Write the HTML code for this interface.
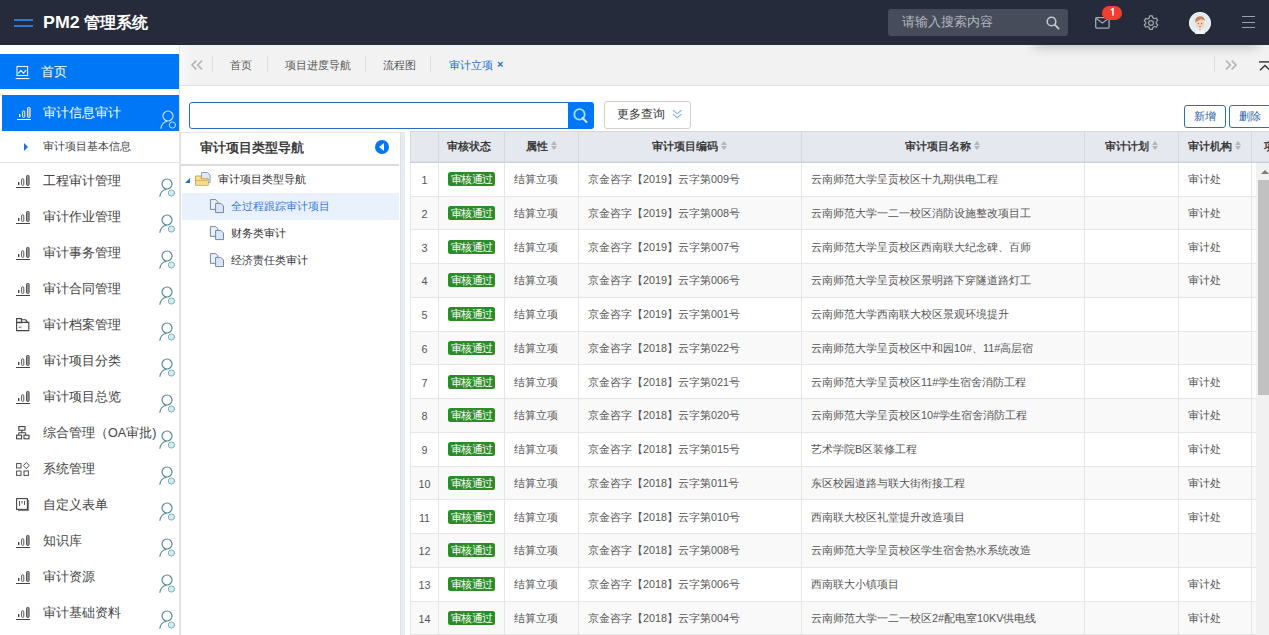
<!DOCTYPE html>
<html><head><meta charset="utf-8">
<style>
*{box-sizing:border-box;margin:0;padding:0}
html,body{width:1269px;height:635px;overflow:hidden;background:#fff;font-family:"Liberation Sans",sans-serif;color:#333}
.abs{position:absolute}
svg.abs{overflow:visible}
#hdr{position:absolute;z-index:2;left:0;top:0;width:1269px;height:44.5px;background:#252b3b}
#hdr .ham{position:absolute;left:14px;width:19px;height:2px;background:#2a7ad6}
#hdr .title{position:absolute;left:43px;top:11px;font-size:16.2px;font-weight:bold;color:#fff;line-height:22px;white-space:nowrap}
#hsearch{position:absolute;left:888px;top:9px;width:180px;height:27px;background:#474c5b;border-radius:3px}
#hsearch span{position:absolute;left:14px;top:5px;font-size:12.6px;line-height:16px;color:#b3b7bf}
#side{position:absolute;left:0;top:44.5px;width:180px;height:591px;background:#fff;border-right:1px solid #e6e6e6}
.blue{position:absolute;background:#0077f7;color:#fff}
.si{position:absolute;left:0;width:179px;height:36px}
.si span{position:absolute;left:43px;top:9px;font-size:12.6px;line-height:18px;color:#444;white-space:nowrap}
.si svg{position:absolute;overflow:visible}
#tabs{position:absolute;left:180px;top:44.5px;width:1089px;height:41px;background:#f2f2f2;border-bottom:1px solid #e0e0e0}
#tabs .t{position:absolute;top:13px;font-size:10.8px;line-height:15px;color:#555;white-space:nowrap}
#tabs .sep{position:absolute;top:11px;width:1px;height:16px;background:#dedede}
#tree{position:absolute;left:179.5px;top:131.5px;width:221px;height:510px;border:1px solid #e0e0e0;background:#fff}
#tbl{position:absolute;left:410px;top:130.5px;width:871px;border-collapse:collapse;table-layout:fixed;font-size:10.8px;color:#555}
#tbl th{height:31px;background:#e6e8f0;border:1px solid #d5d7df;border-bottom-color:#cdd0d8;box-shadow:inset 0 -1px 0 #dadce5;font-weight:bold;color:#3a3a3a;font-size:10.8px;white-space:nowrap;overflow:hidden}
#tbl td{height:33.75px;border:1px solid #e6e6e6;white-space:nowrap;overflow:hidden;padding-left:9px;padding-top:2px}
#tbl tr.alt td{background:#f9f9f9}
#tbl tr.r1 td{height:34px}
#tbl td.c0{padding-left:0;text-align:center}
.sort{display:inline-block;vertical-align:middle;margin-left:3px;width:7px;height:9px;position:relative;top:-1px}
.sort:before{content:"";position:absolute;left:0;top:0;border-left:3.5px solid transparent;border-right:3.5px solid transparent;border-bottom:4px solid #b5b5b5}
.sort:after{content:"";position:absolute;left:0;top:5px;border-left:3.5px solid transparent;border-right:3.5px solid transparent;border-top:4px solid #b5b5b5}
.badge{display:inline-block;position:relative;top:-1px;vertical-align:middle;background:#2b8c28;color:#fff;font-size:10.8px;font-weight:500;line-height:14px;height:14px;width:47px;padding-left:2.5px;border-radius:2.5px;letter-spacing:-0.4px;white-space:nowrap;overflow:hidden}
.btn{position:absolute;border:1px solid #2a6fc0;border-radius:3px;background:#fff;color:#2a5fa8;font-size:10.8px;line-height:20px;text-align:center}
</style></head><body>
<svg width="0" height="0" style="position:absolute">
  <defs>
    <symbol id="bar" viewBox="0 0 16 16">
      <rect x="2" y="8" width="1.4" height="3" fill="currentColor"/>
      <rect x="5.6" y="4.8" width="2.2" height="6.6" rx="1" fill="none" stroke="currentColor" stroke-width="0.9"/>
      <rect x="10.5" y="1.4" width="2.6" height="10" rx="1" fill="#999" stroke="currentColor" stroke-width="0.9"/>
      <rect x="0" y="13" width="14" height="1" fill="currentColor"/>
    </symbol>
    <symbol id="usr" viewBox="0 0 20 24">
      <circle cx="8" cy="7" r="5" fill="none" stroke="currentColor" stroke-width="1.2"/>
      <path d="M0.8 19.8 C1.2 15.8 4 12.6 7.4 12.1" fill="none" stroke="currentColor" stroke-width="1.2"/>
      <circle cx="12.4" cy="16" r="3.1" fill="var(--f,none)" stroke="var(--g,currentColor)" stroke-width="1"/>
    </symbol>
  </defs>
</svg>
<div id="hdr">
  <div class="ham" style="top:19px"></div><div class="ham" style="top:25px"></div>
  <div class="title"><span style="display:inline-block;transform:scaleX(1.1);transform-origin:0 0;margin-right:3.2px">PM2</span> 管理系统</div>
  <div id="hsearch"><span>请输入搜索内容</span>
    <svg class="abs" style="left:158px;top:7px" width="14" height="14" viewBox="0 0 14 14"><circle cx="5.5" cy="5.5" r="4.3" fill="none" stroke="#c5c8ce" stroke-width="1.6"/><path d="M8.7 8.7 L12.5 12.5" stroke="#c5c8ce" stroke-width="1.8" stroke-linecap="round"/></svg>
  </div>
  <svg class="abs" style="left:1095px;top:16.8px" width="15" height="12" viewBox="0 0 15 12"><rect x="0.7" y="0.7" width="13.4" height="10.4" rx="1" fill="none" stroke="#a4a9b1" stroke-width="1.3"/><path d="M0.9 1.2 L7.4 6 L13.9 1.2" fill="none" stroke="#a4a9b1" stroke-width="1.2"/></svg>
  <div class="abs" style="left:1102px;top:6px;width:20px;height:14px;border-radius:7px;background:#f23d30"></div><svg class="abs" style="left:1109.5px;top:8.3px" width="6" height="8" viewBox="0 0 6 8"><path d="M0.8 2 L3 0.7 V7.6" fill="none" stroke="#fff" stroke-width="1.5"/></svg>
  <svg class="abs" style="left:1143px;top:14.5px" width="16" height="16" viewBox="0 0 16 16"><path d="M6.6 0.8h2.8l0.4 2 1.6 0.9 1.9-0.7 1.4 2.4-1.5 1.3v1.8l1.5 1.3-1.4 2.4-1.9-0.7-1.6 0.9-0.4 2H6.6l-0.4-2-1.6-0.9-1.9 0.7-1.4-2.4 1.5-1.3V7.1L1.3 5.8l1.4-2.4 1.9 0.7 1.6-0.9z" fill="none" stroke="#a3a8b0" stroke-width="1.2" stroke-linejoin="round"/><circle cx="8" cy="8" r="2.4" fill="none" stroke="#a3a8b0" stroke-width="1.2"/></svg>
  <svg class="abs" style="left:1189px;top:11.5px" width="22" height="22" viewBox="0 0 22 22"><circle cx="11" cy="11" r="11" fill="#e4ebec"/><circle cx="11" cy="11" r="10.3" fill="none" stroke="#f3f6f6" stroke-width="0.8"/><path d="M6 22 Q7 17 11 16.5 Q15 17 16 22z" fill="#f4f4f6"/><path d="M9.5 16.5 L11 19 L12.5 16.5z" fill="#b9c3cf"/><ellipse cx="11" cy="11.5" rx="4.2" ry="5" fill="#f1d2bf"/><path d="M6.2 10.5 Q5.8 4.5 11 4.3 Q15.8 4.5 15.8 9 Q14 6.8 11.5 7.2 Q9 8.5 6.2 10.5z" fill="#c9825a"/><circle cx="9.3" cy="11.6" r="0.6" fill="#6b4b3a"/><circle cx="12.7" cy="11.6" r="0.6" fill="#6b4b3a"/><path d="M9.8 14 Q11 15.2 12.2 14z" fill="#8a4a40"/></svg>
  <div class="abs" style="left:1242px;top:16.2px;width:13px;height:1.2px;background:#9ba0a9"></div>
  <div class="abs" style="left:1242px;top:21.8px;width:13px;height:1.2px;background:#9ba0a9"></div>
  <div class="abs" style="left:1242px;top:27.2px;width:13px;height:1.2px;background:#9ba0a9"></div>
</div>
<div id="side">
  <div class="blue" style="left:0;top:9.5px;width:179px;height:35px">
    <svg class="abs" style="left:14.5px;top:12px" width="15" height="14" viewBox="0 0 15 14"><rect x="2" y="0.5" width="10.6" height="9" fill="none" stroke="#e6f4ff" stroke-width="1.1"/><path d="M3.4 7.4 L5.8 4.4 L8.6 7.2 L11.2 3.8" fill="none" stroke="#e6f4ff" stroke-width="1.1"/><rect x="0.6" y="12" width="13.8" height="1.1" fill="#e6f4ff"/></svg>
    <span class="abs" style="left:40.5px;top:8.5px;font-size:12.6px;line-height:18px">首页</span></div>
  <div class="blue" style="left:2px;top:50.5px;width:177px;height:36px">
    <svg class="abs" style="left:14.5px;top:10.8px;color:#fff" width="16" height="16"><use href="#bar"/></svg>
    <span class="abs" style="left:41px;top:9px;font-size:12.6px;line-height:18px">审计信息审计</span>
    <svg class="abs" style="left:157.5px;top:14px;color:#bfe0ff" width="20" height="24" viewBox="0 0 20 24"><use href="#usr"/></svg>
  </div>
  <div class="abs" style="left:24px;top:98px;width:0;height:0;border-top:4.5px solid transparent;border-bottom:4.5px solid transparent;border-left:4.5px solid #1a73d6"></div>
  <div class="abs" style="left:43px;top:94px;font-size:10.8px;line-height:14px;color:#444">审计项目基本信息</div>
  <div class="abs" style="left:0;top:117.5px;width:179px;height:1px;background:#e3e3e3"></div>
</div>
<div id="sideitems" class="abs" style="left:0;top:0">
<div class="si" style="top:163px"><svg style="left:16px;top:10.7px;color:#444" width="16" height="16"><use href="#bar"/></svg><span>工程审计管理</span><svg style="left:158.5px;top:14px;color:#5b8c97;--f:#d3ecf3;--g:#7fb0be" width="20" height="24" viewBox="0 0 20 24"><use href="#usr"/></svg></div>
<div class="si" style="top:199px"><svg style="left:16px;top:10.7px;color:#444" width="16" height="16"><use href="#bar"/></svg><span>审计作业管理</span><svg style="left:158.5px;top:14px;color:#5b8c97;--f:#d3ecf3;--g:#7fb0be" width="20" height="24" viewBox="0 0 20 24"><use href="#usr"/></svg></div>
<div class="si" style="top:235px"><svg style="left:16px;top:10.7px;color:#444" width="16" height="16"><use href="#bar"/></svg><span>审计事务管理</span><svg style="left:158.5px;top:14px;color:#5b8c97;--f:#d3ecf3;--g:#7fb0be" width="20" height="24" viewBox="0 0 20 24"><use href="#usr"/></svg></div>
<div class="si" style="top:271px"><svg style="left:16px;top:10.7px;color:#444" width="16" height="16"><use href="#bar"/></svg><span>审计合同管理</span><svg style="left:158.5px;top:14px;color:#5b8c97;--f:#d3ecf3;--g:#7fb0be" width="20" height="24" viewBox="0 0 20 24"><use href="#usr"/></svg></div>
<div class="si" style="top:307px"><svg style="left:16px;top:11px" width="14" height="14" viewBox="0 0 14 14"><path d="M0.6 0.6h4.8v4.2H0.6z M5.4 1.8h4.2l2 2.4 M0.6 4.4h12.2v8.2H0.6z" fill="none" stroke="#444" stroke-width="1.1"/><rect x="2.6" y="8.6" width="3" height="1" fill="#666"/></svg><span>审计档案管理</span><svg style="left:158.5px;top:14px;color:#5b8c97;--f:#d3ecf3;--g:#7fb0be" width="20" height="24" viewBox="0 0 20 24"><use href="#usr"/></svg></div>
<div class="si" style="top:343px"><svg style="left:16px;top:10.7px;color:#444" width="16" height="16"><use href="#bar"/></svg><span>审计项目分类</span><svg style="left:158.5px;top:14px;color:#5b8c97;--f:#d3ecf3;--g:#7fb0be" width="20" height="24" viewBox="0 0 20 24"><use href="#usr"/></svg></div>
<div class="si" style="top:379px"><svg style="left:16px;top:10.7px;color:#444" width="16" height="16"><use href="#bar"/></svg><span>审计项目总览</span><svg style="left:158.5px;top:14px;color:#5b8c97;--f:#d3ecf3;--g:#7fb0be" width="20" height="24" viewBox="0 0 20 24"><use href="#usr"/></svg></div>
<div class="si" style="top:415px"><svg style="left:16px;top:11px" width="14" height="14" viewBox="0 0 14 14"><rect x="2.8" y="0.6" width="6.2" height="3.6" fill="none" stroke="#444" stroke-width="1.1"/><path d="M5.9 4.2v2.5 M2.8 6.7h6.8 M2.8 6.7v2 M9.6 6.7v2" fill="none" stroke="#444" stroke-width="1.1"/><rect x="0.6" y="9.2" width="5" height="3.6" fill="none" stroke="#444" stroke-width="1.1"/><rect x="8" y="9.2" width="5" height="3.6" fill="none" stroke="#444" stroke-width="1.1"/></svg><span>综合管理（OA审批)</span><svg style="left:158.5px;top:14px;color:#5b8c97;--f:#d3ecf3;--g:#7fb0be" width="20" height="24" viewBox="0 0 20 24"><use href="#usr"/></svg></div>
<div class="si" style="top:451px"><svg style="left:16px;top:10.5px" width="14" height="15" viewBox="0 0 14 15"><rect x="0.6" y="1.6" width="4.4" height="4.4" fill="none" stroke="#444" stroke-width="0.95"/><path d="M10.3 0.5 L13.2 3.6 L10.3 6.7 L7.4 3.6z" fill="none" stroke="#444" stroke-width="0.95"/><rect x="0.6" y="9" width="4.4" height="4.4" fill="none" stroke="#444" stroke-width="0.95"/><rect x="8" y="9" width="4.4" height="4.4" fill="none" stroke="#444" stroke-width="0.95"/></svg><span>系统管理</span><svg style="left:158.5px;top:14px;color:#5b8c97;--f:#d3ecf3;--g:#7fb0be" width="20" height="24" viewBox="0 0 20 24"><use href="#usr"/></svg></div>
<div class="si" style="top:487px"><svg style="left:16px;top:11px" width="14" height="14" viewBox="0 0 14 14"><rect x="0.6" y="0.6" width="10.8" height="10.8" fill="none" stroke="#444" stroke-width="1.1"/><path d="M12.6 2v10.6H2" fill="none" stroke="#777" stroke-width="1"/><path d="M3.5 3v5 M6 3v2.5 M8.5 3v4" stroke="#555" stroke-width="1"/></svg><span>自定义表单</span><svg style="left:158.5px;top:14px;color:#5b8c97;--f:#d3ecf3;--g:#7fb0be" width="20" height="24" viewBox="0 0 20 24"><use href="#usr"/></svg></div>
<div class="si" style="top:523px"><svg style="left:16px;top:10.7px;color:#444" width="16" height="16"><use href="#bar"/></svg><span>知识库</span><svg style="left:158.5px;top:14px;color:#5b8c97;--f:#d3ecf3;--g:#7fb0be" width="20" height="24" viewBox="0 0 20 24"><use href="#usr"/></svg></div>
<div class="si" style="top:559px"><svg style="left:16px;top:10.7px;color:#444" width="16" height="16"><use href="#bar"/></svg><span>审计资源</span><svg style="left:158.5px;top:14px;color:#5b8c97;--f:#d3ecf3;--g:#7fb0be" width="20" height="24" viewBox="0 0 20 24"><use href="#usr"/></svg></div>
<div class="si" style="top:595px"><svg style="left:16px;top:10.7px;color:#444" width="16" height="16"><use href="#bar"/></svg><span>审计基础资料</span><svg style="left:158.5px;top:14px;color:#5b8c97;--f:#d3ecf3;--g:#7fb0be" width="20" height="24" viewBox="0 0 20 24"><use href="#usr"/></svg></div>
</div>
<div id="tabs">
  <div class="abs" style="left:0;top:0;width:11px;height:40px;background:linear-gradient(to right,#f8f8f8,#f3f3f3)"></div><svg class="abs" style="left:10.5px;top:15px" width="12" height="10" viewBox="0 0 12 10"><path d="M5.3 0.6 L1 5 L5.3 9.4 M11 0.6 L6.7 5 L11 9.4" fill="none" stroke="#b4b4b4" stroke-width="1.6"/></svg>
  <div class="sep" style="left:32px"></div>
  <span class="t" style="left:50px">首页</span>
  <div class="sep" style="left:87px"></div>
  <span class="t" style="left:105px">项目进度导航</span>
  <div class="sep" style="left:185px"></div>
  <span class="t" style="left:203px">流程图</span>
  <div class="sep" style="left:250px"></div>
  <span class="t" style="left:269px;color:#1a6fd4;font-weight:500">审计立项</span>
  <span class="t" style="left:317px;top:12px;color:#1a6fd4;font-weight:bold;font-size:11px">×</span>
  <div class="sep" style="left:1034px"></div>
  <svg class="abs" style="left:1045px;top:15px" width="12" height="10" viewBox="0 0 12 10"><path d="M1 0.6 L5.3 5 L1 9.4 M6.7 0.6 L11 5 L6.7 9.4" fill="none" stroke="#b4b4b4" stroke-width="1.6"/></svg>
  <svg class="abs" style="left:1078.5px;top:16px" width="12" height="10" viewBox="0 0 12 10"><rect x="0" y="0.2" width="12" height="1.4" fill="#333"/><path d="M1 9.2 L6 4.4 L11 9.2" fill="none" stroke="#333" stroke-width="1.4"/></svg>
</div>
<div class="abs" style="z-index:1;left:1034px;top:32px;width:224px;height:12px;background:#252b3b;box-shadow:0 3px 12px rgba(0,0,0,0.22)"></div>
<!-- search -->
<div class="abs" style="left:189px;top:102px;width:380px;height:27px;border:1.3px solid #2c6cb8;border-radius:3px 0 0 3px;background:#fff"></div>
<div class="abs" style="left:568px;top:102px;width:26px;height:27px;background:#0077f7;border-radius:0 3px 3px 0">
  <svg class="abs" style="left:4px;top:5px" width="18" height="18" viewBox="0 0 18 18"><circle cx="7.5" cy="7.4" r="5.2" fill="none" stroke="#a8dcff" stroke-width="1.8"/><path d="M10.5 11 L14.5 15" stroke="#cfe6ff" stroke-width="2" stroke-linecap="round"/></svg>
</div>
<div class="abs" style="left:603.5px;top:100.5px;width:87px;height:28px;border:1px solid #cfcfcf;border-radius:3px;background:#fff">
  <span class="abs" style="left:12px;top:4.3px;font-size:11.7px;line-height:15px;color:#333">更多查询</span>
  <svg class="abs" style="left:67px;top:7.5px" width="11" height="11" viewBox="0 0 11 11"><path d="M1 1.2 L5.2 4.8 L9.4 1.2 M1 5.2 L5.2 8.8 L9.4 5.2" fill="none" stroke="#7aaae8" stroke-width="1.1"/></svg>
</div>
<div class="btn" style="left:1184px;top:105px;width:42px;height:23px">新增</div>
<div class="btn" style="left:1229px;top:105px;width:42px;height:23px">删除</div>
<!-- tree -->
<div id="tree">
  <div class="abs" style="left:0;top:31.5px;width:218px;height:1.5px;background:#dcdcdc"></div>
  <div class="abs" style="left:19.5px;top:6px;font-size:12.6px;font-weight:bold;line-height:18px;color:#3c3c3c">审计项目类型导航</div>
  <div class="abs" style="left:194.5px;top:7.5px;width:14px;height:14px;border-radius:7px;background:#0077f7"></div>
  <div class="abs" style="left:198px;top:10.5px;width:0;height:0;border-top:4px solid transparent;border-bottom:4px solid transparent;border-right:5px solid #fff"></div>
  <div class="abs" style="left:4px;top:45.5px;width:0;height:0;border-left:5.5px solid transparent;border-bottom:5.5px solid #1a73d6"></div>
  <svg class="abs" style="left:14px;top:39.5px" width="16" height="15" viewBox="0 0 16 15"><path d="M6.5 0.5h6l2.6 2.6V10.6H6.5z" fill="#dce8fa" stroke="#7f95b8" stroke-width="0.9"/><path d="M0.5 4h5.8v2.8h6.9v6.5H0.5z" fill="#f7df92" stroke="#c89e45" stroke-width="0.9"/><path d="M1.2 8.4h11.6" stroke="#d9b45e" stroke-width="1"/><rect x="1.2" y="9" width="11.6" height="3.8" fill="#f3dc8c"/></svg>
  <div class="abs" style="left:37px;top:39px;font-size:10.8px;line-height:14px;color:#333">审计项目类型导航</div>
  <div class="abs" style="left:1px;top:60px;width:217px;height:27px;background:#e9f1fc"></div>
<svg class="abs" style="left:28.5px;top:66.5px" width="16" height="15" viewBox="0 0 16 15"><path d="M1.4 0.6h5.4l2 2V10.4H1.4z" fill="#e8f0fb" stroke="#78879c" stroke-width="1"/><path d="M6.6 4.4h5.3l2.6 2.6V13.6H6.6z" fill="#d9e6f7" stroke="#78879c" stroke-width="1"/></svg><div class="abs" style="left:50px;top:66px;font-size:10.8px;line-height:14px;color:#3a7bd5;white-space:nowrap">全过程跟踪审计项目</div>
<svg class="abs" style="left:28.5px;top:93.5px" width="16" height="15" viewBox="0 0 16 15"><path d="M1.4 0.6h5.4l2 2V10.4H1.4z" fill="#e8f0fb" stroke="#78879c" stroke-width="1"/><path d="M6.6 4.4h5.3l2.6 2.6V13.6H6.6z" fill="#d9e6f7" stroke="#78879c" stroke-width="1"/></svg><div class="abs" style="left:50px;top:93px;font-size:10.8px;line-height:14px;color:#333;white-space:nowrap">财务类审计</div>
<svg class="abs" style="left:28.5px;top:120.5px" width="16" height="15" viewBox="0 0 16 15"><path d="M1.4 0.6h5.4l2 2V10.4H1.4z" fill="#e8f0fb" stroke="#78879c" stroke-width="1"/><path d="M6.6 4.4h5.3l2.6 2.6V13.6H6.6z" fill="#d9e6f7" stroke="#78879c" stroke-width="1"/></svg><div class="abs" style="left:50px;top:120px;font-size:10.8px;line-height:14px;color:#333;white-space:nowrap">经济责任类审计</div>
</div>
<div class="abs" style="left:400.5px;top:131.5px;width:4.5px;height:504px;background:#e6ebf3"></div>
<table id="tbl">
<colgroup><col style="width:28px"><col style="width:66px"><col style="width:74px"><col style="width:223px"><col style="width:283px"><col style="width:94px"><col style="width:73px"><col style="width:30px"></colgroup>
<thead><tr><th></th><th style="padding-right:5px">审核状态</th><th>属性<i class="sort"></i></th><th>审计项目编码<i class="sort"></i></th><th>审计项目名称<i class="sort"></i></th><th>审计计划<i class="sort"></i></th><th>审计机构<i class="sort"></i></th><th style="text-align:left;padding-left:12px">项</th></tr></thead>
<tbody>
<tr class="r1"><td class="c0">1</td><td class="c1"><span class="badge">审核通过</span></td><td class="c2">结算立项</td><td class="c3">京金咨字【2019】云字第009号</td><td class="c4">云南师范大学呈贡校区十九期供电工程</td><td class="c5"></td><td class="c6">审计处</td><td class="c7"></td></tr>
<tr class="alt"><td class="c0">2</td><td class="c1"><span class="badge">审核通过</span></td><td class="c2">结算立项</td><td class="c3">京金咨字【2019】云字第008号</td><td class="c4">云南师范大学一二一校区消防设施整改项目工</td><td class="c5"></td><td class="c6">审计处</td><td class="c7"></td></tr>
<tr><td class="c0">3</td><td class="c1"><span class="badge">审核通过</span></td><td class="c2">结算立项</td><td class="c3">京金咨字【2019】云字第007号</td><td class="c4">云南师范大学呈贡校区西南联大纪念碑、百师</td><td class="c5"></td><td class="c6">审计处</td><td class="c7"></td></tr>
<tr class="alt"><td class="c0">4</td><td class="c1"><span class="badge">审核通过</span></td><td class="c2">结算立项</td><td class="c3">京金咨字【2019】云字第006号</td><td class="c4">云南师范大学呈贡校区景明路下穿隧道路灯工</td><td class="c5"></td><td class="c6">审计处</td><td class="c7"></td></tr>
<tr><td class="c0">5</td><td class="c1"><span class="badge">审核通过</span></td><td class="c2">结算立项</td><td class="c3">京金咨字【2019】云字第001号</td><td class="c4">云南师范大学西南联大校区景观环境提升</td><td class="c5"></td><td class="c6"></td><td class="c7"></td></tr>
<tr class="alt"><td class="c0">6</td><td class="c1"><span class="badge">审核通过</span></td><td class="c2">结算立项</td><td class="c3">京金咨字【2018】云字第022号</td><td class="c4">云南师范大学呈贡校区中和园10#、11#高层宿</td><td class="c5"></td><td class="c6"></td><td class="c7"></td></tr>
<tr><td class="c0">7</td><td class="c1"><span class="badge">审核通过</span></td><td class="c2">结算立项</td><td class="c3">京金咨字【2018】云字第021号</td><td class="c4">云南师范大学呈贡校区11#学生宿舍消防工程</td><td class="c5"></td><td class="c6">审计处</td><td class="c7"></td></tr>
<tr class="alt"><td class="c0">8</td><td class="c1"><span class="badge">审核通过</span></td><td class="c2">结算立项</td><td class="c3">京金咨字【2018】云字第020号</td><td class="c4">云南师范大学呈贡校区10#学生宿舍消防工程</td><td class="c5"></td><td class="c6">审计处</td><td class="c7"></td></tr>
<tr><td class="c0">9</td><td class="c1"><span class="badge">审核通过</span></td><td class="c2">结算立项</td><td class="c3">京金咨字【2018】云字第015号</td><td class="c4">艺术学院B区装修工程</td><td class="c5"></td><td class="c6">审计处</td><td class="c7"></td></tr>
<tr class="alt"><td class="c0">10</td><td class="c1"><span class="badge">审核通过</span></td><td class="c2">结算立项</td><td class="c3">京金咨字【2018】云字第011号</td><td class="c4">东区校园道路与联大街衔接工程</td><td class="c5"></td><td class="c6">审计处</td><td class="c7"></td></tr>
<tr><td class="c0">11</td><td class="c1"><span class="badge">审核通过</span></td><td class="c2">结算立项</td><td class="c3">京金咨字【2018】云字第010号</td><td class="c4">西南联大校区礼堂提升改造项目</td><td class="c5"></td><td class="c6">审计处</td><td class="c7"></td></tr>
<tr class="alt"><td class="c0">12</td><td class="c1"><span class="badge">审核通过</span></td><td class="c2">结算立项</td><td class="c3">京金咨字【2018】云字第008号</td><td class="c4">云南师范大学呈贡校区学生宿舍热水系统改造</td><td class="c5"></td><td class="c6"></td><td class="c7"></td></tr>
<tr><td class="c0">13</td><td class="c1"><span class="badge">审核通过</span></td><td class="c2">结算立项</td><td class="c3">京金咨字【2018】云字第006号</td><td class="c4">西南联大小镇项目</td><td class="c5"></td><td class="c6">审计处</td><td class="c7"></td></tr>
<tr class="alt"><td class="c0">14</td><td class="c1"><span class="badge">审核通过</span></td><td class="c2">结算立项</td><td class="c3">京金咨字【2018】云字第004号</td><td class="c4">云南师范大学一二一校区2#配电室10KV供电线</td><td class="c5"></td><td class="c6">审计处</td><td class="c7"></td></tr>
</tbody></table>
<!-- scrollbar -->
<div class="abs" style="left:1256px;top:163px;width:13px;height:472px;background:#f1f1f1"></div>
<div class="abs" style="left:1260.5px;top:170px;width:0;height:0;border-left:4px solid transparent;border-right:4px solid transparent;border-bottom:4px solid #7a7a7a"></div>
<div class="abs" style="left:1258px;top:180px;width:11px;height:215px;background:#c1c1c1"></div>
</body></html>
